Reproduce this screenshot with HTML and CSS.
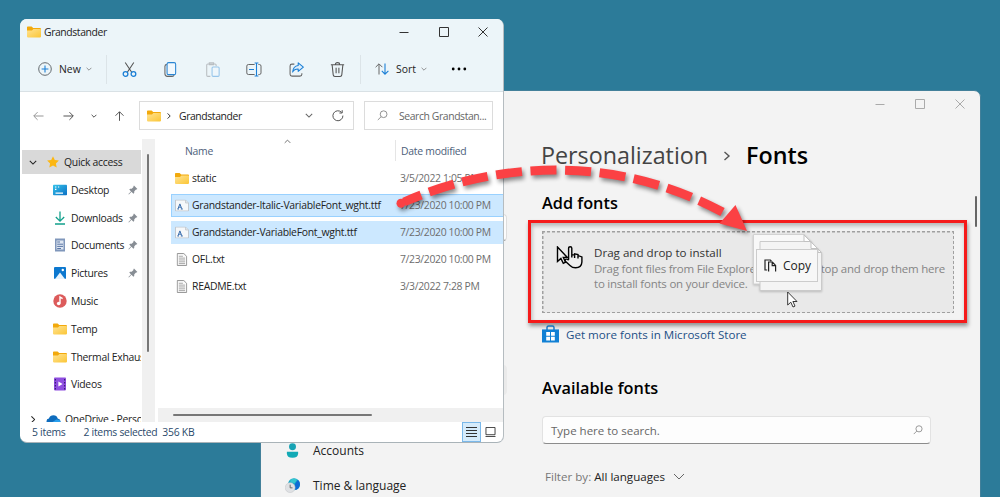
FILE: index.html
```html
<!DOCTYPE html>
<html lang="en">
<head>
  <meta charset="UTF-8" />
  <meta name="viewport" content="width=device-width, initial-scale=1" />
  <title>Install fonts</title>
  <link rel="stylesheet" href="styles.css">
</head>
<body>
  <!-- shared icons -->
  <svg class="defs" aria-hidden="true">
    <defs>
      <linearGradient id="gFolder" x1="0" y1="0" x2="1" y2="1">
        <stop offset="0" stop-color="#ffe394" />
        <stop offset="1" stop-color="#fbc636" />
      </linearGradient>
      <linearGradient id="gDesk" x1="0" y1="0" x2="1" y2="1">
        <stop offset="0" stop-color="#35c3ea" />
        <stop offset="1" stop-color="#0b6fc4" />
      </linearGradient>
    </defs>
    <symbol id="folder" viewBox="0 0 14 12">
      <path d="M0 1.2Q0 .4.8.4H4.6L6.2 2H13Q14 2 14 3V6H0Z" fill="#f2a90c" />
      <path d="M0 4.4H5L6.4 3H13.2Q14 3 14 3.8V10.6Q14 11.4 13.2 11.4H.8Q0 11.4 0 10.6Z" fill="url(#gFolder)" />
    </symbol>
    <symbol id="pin" viewBox="0 0 10 10">
      <path d="M6 .6 9.4 4 8.6 4.6 8 4.5 6.3 6.3 6.2 8 5.4 8.7 3.5 6.8 .9 9.6 .4 9.1 3 6.4 1.3 4.6 2 3.8 3.7 3.7 5.5 2 5.4 1.3Z" fill="#878d94" />
    </symbol>
    <symbol id="ttf" viewBox="0 0 14 12">
      <path d="M.5.5H10.5L13.5 3.5V11.5H.5Z" fill="#f6f8fa" stroke="#c2c8ce" />
      <path d="M10.5.5V3.5H13.5" fill="#dfe4e8" stroke="#c2c8ce" stroke-width=".8" />
      <path d="M2.4 9.5H4M5.8 9.5H7.8M3 9.3 4.9 4.4 6.8 9.3M3.8 7.7H6" fill="none" stroke="#3b6fae" stroke-width="1" />
    </symbol>
    <symbol id="txt" viewBox="0 0 12 14">
      <path d="M.9.6H8L11 3.6V13.4H.9Z" fill="#fafafa" stroke="#8c8c8c" />
      <path d="M2.6 3.5H7M2.6 5.5H9.3M2.6 7.5H9.3M2.6 9.5H9.3M2.6 11.4H9.3" stroke="#9a9a9a" stroke-width=".9" />
    </symbol>
    <symbol id="chev" viewBox="0 0 10 6">
      <path d="M1 1 5 5 9 1" fill="none" stroke="currentColor" stroke-width="1.3" />
    </symbol>
    <symbol id="magnify" viewBox="0 0 12 12">
      <circle cx="7.2" cy="4.6" r="3.7" fill="none" stroke="currentColor" />
      <path d="M4.5 7.3.9 10.9" stroke="currentColor" />
    </symbol>
    <symbol id="min" viewBox="0 0 10 10"><path d="M.5 5.5H9.5" stroke="currentColor" /></symbol>
    <symbol id="max" viewBox="0 0 10 10"><path d="M.5.5H9.5V9.5H.5Z" fill="none" stroke="currentColor" /></symbol>
    <symbol id="close" viewBox="0 0 10 10"><path d="M.5.5 9.5 9.5M9.5.5.5 9.5" stroke="currentColor" /></symbol>
  </svg>

  <main class="desktop">
    <!-- Settings -->
    <section class="window settings">
      <div class="caption caption-muted">
        <svg><use href="#min" /></svg>
        <svg><use href="#max" /></svg>
        <svg><use href="#close" /></svg>
      </div>

      <div class="settings-body">
        <nav class="settings-nav">
          <div class="nav-search"></div>
          <div class="nav-item selected"></div>
          <div class="nav-item"></div>
          <div class="nav-item">
            <svg viewBox="0 0 14 16">
              <circle cx="7" cy="4" r="3.7" fill="#18a3b4" />
              <path d="M1 9.4H13V10.8Q13 15.6 7 15.6T1 10.8Z" fill="#12a9b5" />
            </svg>
            Accounts
          </div>
          <div class="nav-item">
            <svg viewBox="0 0 14 14">
              <circle cx="8.4" cy="5.8" r="5.6" fill="#14a7c6" />
              <path d="M12 1.6A5.6 5.6 0 0 1 9.5 11.3L9 6Z" fill="#0c6bd4" />
              <path d="M5 1.6Q8 0 11.4 1.4L9 5 5 4Z" fill="#35c5cf" />
              <circle cx="4.8" cy="9" r="4.6" fill="#dfe1e4" stroke="#c4c7ca" stroke-width=".5" />
              <path d="M4.8 6.2V9.2H7" fill="none" stroke="#666" stroke-width=".9" />
            </svg>
            Time &amp; language
          </div>
        </nav>

        <div class="settings-main">
          <h1><span class="crumb">Personalization</span>
            <svg class="crumb-sep" viewBox="0 0 8 10"><path d="M1.5 1 6 5 1.5 9" fill="none" stroke="#555" stroke-width="1.4" /></svg>
            <span>Fonts</span></h1>

          <h2>Add fonts</h2>
          <div class="highlight">
            <div class="dropzone">
              <svg class="drag-icon" viewBox="0 0 27 23">
                <path d="M1.5 1V15.5L4.9 12.4 7.3 17.3 9.6 16.2 7.3 11.4H11.3Z" fill="#eee" stroke="#000" stroke-width="1.4" />
                <path d="M12.6 13.8V2.2Q12.6.8 14.2.8T15.8 2.2V8.6L18.6 8.9V7.9L22 8.6V9.6L25.9 10.9V16Q25.6 21.8 19.6 21.8 16.4 21.8 14 19.4L9.4 15.4Q8.6 13.8 10 13.2Q11.4 12.8 12.6 14.2M15.8 8V11.5M18.6 8.9V12M22 9.6V12.4" fill="#eee" stroke="#000" stroke-width="1.4" />
              </svg>
              <div class="drop-text">
                <p class="drop-title">Drag and drop to install</p>
                <p>Drag font files from File Explorer or the desktop and drop them here</p>
                <p>to install fonts on your device.</p>
              </div>
            </div>
          </div>

          <a class="store">
            <svg viewBox="0 0 17 18">
              <path d="M5 5V2.5Q5 1 6.5 1H10.5Q12 1 12 2.5V5" fill="none" stroke="#1473c0" stroke-width="1.4" />
              <path d="M0 4.4H17V17.5H0Z" fill="#1180d4" />
              <path d="M4.2 7H8V10.7H4.2ZM9 7H12.8V10.7H9ZM4.2 11.7H8V15.4H4.2ZM9 11.7H12.8V15.4H9Z" fill="#fff" />
            </svg>
            <span>Get more fonts in Microsoft Store</span>
          </a>

          <h2 class="available">Available fonts</h2>
          <div class="font-search">
            <span>Type here to search.</span>
            <svg><use href="#magnify" /></svg>
          </div>
          <div class="filter">
            <span class="filter-label">Filter by:</span>
            <span class="filter-value">All languages</span>
            <svg viewBox="0 0 12 7"><path d="M1 1 6 6 11 1" fill="none" stroke="currentColor" /></svg>
          </div>
        </div>
      </div>
      <div class="settings-scroll"></div>
    </section>

    <!-- File Explorer -->
    <section class="window explorer">
      <header class="explorer-top">
        <div class="titlebar">
          <svg class="folder"><use href="#folder" /></svg>
          <span>Grandstander</span>
          <div class="caption">
            <svg><use href="#min" /></svg>
            <svg><use href="#max" /></svg>
            <svg><use href="#close" /></svg>
          </div>
        </div>
        <div class="toolbar">
          <div class="tool tool-new">
            <svg viewBox="0 0 14 14"><circle cx="7" cy="7" r="6.3" fill="none" stroke="#656b70" /><path d="M7 3.6V10.4M3.6 7H10.4" stroke="#1b7fd6" stroke-width="1.1" /></svg>
            <span>New</span>
            <svg class="chev"><use href="#chev" /></svg>
          </div>
          <div class="tool-icons">
            <svg viewBox="0 0 14 14"><path d="M3 .4 9.2 9.8M11 .4 4.8 9.8" stroke="#555" /><circle cx="3.3" cy="11.2" r="2.2" fill="none" stroke="#1b7fd6" stroke-width="1.2" /><circle cx="10.7" cy="11.2" r="2.2" fill="none" stroke="#1b7fd6" stroke-width="1.2" /></svg>
            <svg viewBox="0 0 14 14"><path d="M3.6 2.2Q1.8 2.4 1.8 4V11Q1.8 13.4 4.2 13.4H8.6Q10 13.4 10.4 12.4" fill="none" stroke="#666" /><rect x="3.8" y=".6" width="8" height="11.2" rx="1.4" fill="#f1f8fd" stroke="#2a85d3" /></svg>
            <svg viewBox="0 0 14 14"><path d="M5 13.4H2.6Q1.6 13.4 1.6 12.4V2.8Q1.6 1.8 2.6 1.8H9.4Q10.4 1.8 10.4 2.8V4M4 .7H8V2.6H4Z" fill="none" stroke="#b9bec2" /><rect x="6.6" y="4.6" width="6.6" height="8.8" rx="1" fill="#eef6fb" stroke="#97c5ea" /></svg>
            <svg class="rename" viewBox="0 0 16 14"><path d="M8.6 2H2.4Q.8 2 .8 3.6V10.4Q.8 12 2.4 12H8.6M12.4 2H13.4Q15 2 15 3.6V10.4Q15 12 13.4 12H12.4" fill="none" stroke="#666" /><path d="M3 7H8M10.5.5V13.5M8.6.5H12.4M8.6 13.5H12.4" stroke="#1b7fd6" stroke-width="1.1" /></svg>
            <svg viewBox="0 0 14 14"><path d="M5 2H2.8Q1 2 1 3.8V11.4Q1 13.2 2.8 13.2H10.2Q12 13.2 12 11.4V10.4" fill="none" stroke="#666" /><path d="M8.6.8 13.4 4.8 8.6 8.8V6.5Q5 6.4 3.4 9.4 3.8 3.8 8.6 3.2Z" fill="#dfeefa" stroke="#1b7fd6" stroke-linejoin="round" /></svg>
            <svg viewBox="0 0 14 14"><path d="M.8 2.6H13.2M5 2.4Q5 .6 7 .6T9 2.4M2 2.8 3 12Q3.2 13.5 4.6 13.5H9.4Q10.8 13.5 11 12L12 2.8M5.7 5.4V10.6M8.3 5.4V10.6" fill="none" stroke="#555" /></svg>
          </div>
          <div class="tool tool-sort">
            <svg viewBox="0 0 14 12"><path d="M4 11.5V1M.6 4.2 4 .8 7.4 4.2" fill="none" stroke="#666" /><path d="M10 .5V11M6.8 7.8 10 11.2 13.4 7.8" fill="none" stroke="#1b7fd6" stroke-width="1.1" /></svg>
            <span>Sort</span>
            <svg class="chev"><use href="#chev" /></svg>
          </div>
          <svg class="more" viewBox="0 0 16 4"><circle cx="2.2" cy="2" r="1.4" /><circle cx="8" cy="2" r="1.4" /><circle cx="13.8" cy="2" r="1.4" /></svg>
        </div>
      </header>

      <div class="address-row">
        <svg class="arrow back" viewBox="0 0 12 10"><path d="M11.5 5H1M5 .8.8 5 5 9.2" fill="none" stroke="#8d8d8d" /></svg>
        <svg class="arrow fwd" viewBox="0 0 12 10"><path d="M.5 5H11M7 .8 11.2 5 7 9.2" fill="none" stroke="#444" /></svg>
        <svg class="recent"><use href="#chev" /></svg>
        <svg class="arrow up" viewBox="0 0 12 11"><path d="M6 10.8V1M1.6 5.2 6 .8 10.4 5.2" fill="none" stroke="#444" /></svg>
        <div class="address">
          <svg class="folder"><use href="#folder" /></svg>
          <svg class="sep" viewBox="0 0 4 6"><path d="M.6.4 3.2 3 .6 5.6" fill="none" stroke="#333" /></svg>
          <span>Grandstander</span>
          <svg class="drop"><use href="#chev" /></svg>
          <svg class="refresh" viewBox="0 0 12 12"><path d="M9.6 2.4A5 5 0 1 0 10.9 5.6M10.2.2V3H7.4" fill="none" stroke="#555" /></svg>
        </div>
        <div class="search">
          <svg><use href="#magnify" /></svg>
          <span>Search Grandstan...</span>
        </div>
      </div>

      <div class="explorer-body">
        <aside class="tree">
          <div class="tree-root active">
            <svg class="twisty"><use href="#chev" /></svg>
            <svg class="star" viewBox="0 0 12 12"><path d="M6 .2 7.8 4 11.9 4.5 8.9 7.4 9.7 11.6 6 9.5 2.3 11.6 3.1 7.4.1 4.5 4.2 4Z" fill="#fcb713" /></svg>
            <span>Quick access</span>
          </div>
          <ul>
            <li><svg viewBox="0 0 14 12"><rect y=".8" width="14" height="10.4" rx=".8" fill="url(#gDesk)" /><path d="M2 3H3.4M2 5.4H3.4M5 3H6.2M2.5 9.2H10" stroke="#fff" stroke-width="1.2" /></svg><span>Desktop</span><svg class="pin"><use href="#pin" /></svg></li>
            <li><svg viewBox="0 0 14 14"><path d="M7 .5V10M2.8 6 7 10.2 11.2 6M2 13H12" fill="none" stroke="#12a08c" stroke-width="1.3" /></svg><span>Downloads</span><svg class="pin"><use href="#pin" /></svg></li>
            <li><svg viewBox="0 0 14 14"><path d="M2 .5H12V13.5H2Z" fill="#8097bb" /><path d="M3.5 2.5H10.5V11.5H3.5Z" fill="#dfe7f2" /><path d="M4.2 4H7M4.2 6.2H10M4.2 8.4H10M4.2 10.5H8" stroke="#5a76a5" /></svg><span>Documents</span><svg class="pin"><use href="#pin" /></svg></li>
            <li><svg viewBox="0 0 14 14"><rect x="1" y="1" width="12" height="12" rx="1" fill="#0c78cf" /><path d="M2 13 7 6.4 12 13Z" fill="#e8f4fd" /><circle cx="9.8" cy="4" r="1.2" fill="#fff" /></svg><span>Pictures</span><svg class="pin"><use href="#pin" /></svg></li>
            <li><svg viewBox="0 0 14 14"><circle cx="7" cy="7" r="6.7" fill="#dc5b5b" /><path d="M7 9.6V3L9.6 4.6" fill="none" stroke="#fff" stroke-width="1.4" /><circle cx="5.7" cy="9.5" r="1.8" fill="#fff" /></svg><span>Music</span></li>
            <li><svg viewBox="0 0 14 12"><use href="#folder" /></svg><span>Temp</span></li>
            <li><svg viewBox="0 0 14 12"><use href="#folder" /></svg><span>Thermal Exhaust</span></li>
            <li><svg viewBox="0 0 14 14"><rect x="1" y=".6" width="12" height="12.8" rx=".8" fill="#8f4fe0" /><path d="M2.4 2V12.6M11.6 2V12.6" stroke="#3c1c78" stroke-width="1.2" stroke-dasharray="1.5 1.5" /><path d="M5.4 4.4 9.6 7 5.4 9.6Z" fill="#fff" /></svg><span>Videos</span></li>
          </ul>
          <div class="tree-root onedrive">
            <svg class="twisty side"><use href="#chev" /></svg>
            <svg class="cloud" viewBox="0 0 14 9"><path d="M3 9Q0 8.6 0 6.2 0 4 2.4 3.6 3.6.3 7 .3 10.2.3 11.2 3.4 14 4 14 6.4 14 9 11 9Z" fill="#0f6cbd" /><path d="M3 9 9.8 4.4Q14 4.4 14 6.6 13.8 9 11 9Z" fill="#2aa0ee" /></svg>
            <span>OneDrive - Personal</span>
          </div>
        </aside>
        <div class="tree-scroll"><div class="thumb"></div></div>

        <div class="files">
          <div class="file-row head">
            <span class="name">Name</span>
            <svg class="sort-mark"><use href="#chev" /></svg>
            <span class="date">Date modified</span>
          </div>
          <div class="file-row"><svg viewBox="0 0 14 12"><use href="#folder" /></svg><span class="name">static</span><span class="date">3/5/2022 1:05 PM</span></div>
          <div class="file-row picked focus"><svg viewBox="0 0 14 12"><use href="#ttf" /></svg><span class="name">Grandstander-Italic-VariableFont_wght.ttf</span><span class="date">7/23/2020 10:00 PM</span></div>
          <div class="file-row picked"><svg viewBox="0 0 14 12"><use href="#ttf" /></svg><span class="name">Grandstander-VariableFont_wght.ttf</span><span class="date">7/23/2020 10:00 PM</span></div>
          <div class="file-row"><svg viewBox="0 0 12 14"><use href="#txt" /></svg><span class="name">OFL.txt</span><span class="date">7/23/2020 10:00 PM</span></div>
          <div class="file-row"><svg viewBox="0 0 12 14"><use href="#txt" /></svg><span class="name">README.txt</span><span class="date">3/3/2022 7:28 PM</span></div>
          <div class="h-scroll"><div class="thumb"></div></div>
        </div>
      </div>

      <footer class="status">
        <span class="count">5 items</span>
        <span class="selection">2 items selected</span>
        <span class="size">356 KB</span>
        <div class="view on"><svg viewBox="0 0 11 10"><path d="M0 .5H11M0 3.5H11M0 6.5H11M0 9.5H11" stroke="#333" /></svg></div>
        <div class="view"><svg viewBox="0 0 11 11"><path d="M.5.5H10.5V8.5H.5ZM0 10.5H11" fill="none" stroke="#333" /></svg></div>
      </footer>
    </section>

    <!-- Dragged files -->
    <div class="drag">
      <svg class="sheets" viewBox="0 0 70 60">
        <path d="M.5.5H51L59 8V50H.5Z" fill="#f8f8f8" stroke="#d2d2d2" />
        <path d="M7 7.5H57L68.5 18.5V56.5H7Z" fill="#f4f4f4" stroke="#cacaca" />
        <path d="M51 .5V7.5H58V14.5H65V18.5H68.5L51 1" fill="#fff" stroke="#c2c2c2" />
      </svg>
      <div class="tip">
        <svg viewBox="0 0 13 13"><path d="M3.2 11H1V1H6.4L7.4 2.2M4.6 12.4V3H8.4L11.6 6.4V12.4M8.2 3V6.6H11.6" fill="none" stroke="#222" stroke-width="1.2" /></svg>
        Copy
      </div>
      <svg class="pointer" viewBox="0 0 11 17"><path d="M.7 1V14L3.8 11.2 6 16 8 15.1 5.9 10.5H10Z" fill="#fff" stroke="#222" stroke-width=".9" /></svg>
    </div>

    <svg class="swoosh" viewBox="0 0 1000 497">
      <path d="M404 202C500 160 620 155 726 214" fill="none" stroke="#fb4144" stroke-width="9" stroke-dasharray="26 8.6" stroke-dashoffset="7.5" />
      <circle cx="401" cy="203.2" r="4.5" fill="#fb4144" />
      <path d="M735.5 205 747 231 719.5 223.5Z" fill="#fb4144" />
    </svg>
  </main>
</body>
</html>
```
FILE: styles.css
```css
*, *::before, *::after {
  box-sizing: border-box;
}
body {
  margin: 0;
  font-family: "Open Sans", "Noto Sans", sans-serif;
  font-size: 10.5px;
  color: #222;
  overflow: hidden;
}
h1, h2, p, ul {
  margin: 0;
  padding: 0;
}
svg {
  display: block;
  flex: none;
}
.defs {
  position: absolute;
  width: 0;
  height: 0;
}

.desktop {
  position: relative;
  width: 1000px;
  height: 497px;
  overflow: hidden;
  background: #2c7b99;
  white-space: nowrap;
}
.window {
  position: absolute;
  overflow: hidden;
}
.caption {
  display: flex;
  gap: 29.5px;
  color: #333;
}
.caption svg {
  width: 10px;
  height: 10px;
}

/* Settings */
.settings {
  left: 260px;
  top: 90px;
  width: 721px;
  height: 420px;
  border: 1px solid #43809a;
  border-radius: 7px;
  background: #f3f3f3;
}
.caption-muted {
  justify-content: flex-end;
  padding: 8px 15px 0 0;
  gap: 30px;
  color: #aaa;
}
.settings-body {
  display: flex;
}
.settings-nav {
  width: 246px;
  padding-top: 105px;
}
.nav-search {
  height: 27px;
  margin-bottom: 124px;
  border: 1px solid #ddd;
  border-bottom-color: #999;
  border-radius: 4px;
  background: #fcfcfc;
}
.nav-item {
  display: flex;
  align-items: center;
  gap: 13px;
  height: 35px;
  padding-left: 24px;
  font-size: 12px;
}
.nav-item svg {
  width: 15px;
  height: 15px;
}
.nav-item.selected {
  height: 30px;
  margin-bottom: 3px;
  border-radius: 4px;
  background: #eaeaea;
}
.settings-main {
  width: 389px;
  margin-left: 35px;
}
.settings-main h1 {
  display: flex;
  align-items: center;
  height: 36px;
  margin: 28px 0 0 -1px;
  font-size: 23.3px;
  font-weight: 600;
  color: #000;
}
.crumb {
  font-weight: 400;
  color: #444;
}
.crumb-sep {
  width: 8px;
  height: 10px;
  margin: 1px 15px 0 15px;
}
.settings-main h2 {
  height: 24px;
  margin-top: 18px;
  font-size: 16.3px;
  line-height: 24px;
  font-weight: 600;
  color: #000;
}
.highlight {
  width: 439px;
  height: 103px;
  margin: 5px 0 0 -14px;
  padding: 8px 10px 0 11px;
  border: 3px solid #f51a1a;
  box-shadow: 1px 3px 4px rgba(0, 0, 0, .4), inset 1px 3px 4px rgba(0, 0, 0, .25);
}
/* 3px dash, 2px gap on each edge */
.dropzone {
  display: flex;
  height: 82px;
  padding: 15px 0 0 14px;
  background:
    repeating-linear-gradient(90deg, #a0a0a0 0 3px, transparent 3px 5px) top / 100% 1.5px no-repeat,
    repeating-linear-gradient(90deg, #a0a0a0 0 3px, transparent 3px 5px) bottom / 100% 1.5px no-repeat,
    repeating-linear-gradient(#a0a0a0 0 3px, transparent 3px 5px) left / 1.5px 100% no-repeat,
    repeating-linear-gradient(#a0a0a0 0 3px, transparent 3px 5px) right / 1.5px 100% no-repeat,
    #e9e9e9;
}
.drag-icon {
  width: 27px;
  height: 23px;
}
.drop-text {
  margin: -1px 0 0 11px;
  font-size: 11.5px;
  line-height: 15.7px;
  letter-spacing: -.22px;
  color: #858585;
}
.drop-title {
  font-size: 11.6px;
  letter-spacing: 0;
  color: #333;
}
.store {
  display: flex;
  align-items: center;
  gap: 7px;
  height: 18px;
  margin-top: 2px;
  font-size: 11.6px;
  color: #1d4f86;
}
.store svg {
  width: 17px;
  height: 18px;
}
.settings-main .available {
  margin-top: 33px;
}
.font-search {
  display: flex;
  align-items: center;
  justify-content: space-between;
  height: 28px;
  margin-top: 16px;
  padding: 0 7px 0 8px;
  border: 1px solid #e2e2e2;
  border-bottom-color: #8c8c8c;
  border-radius: 4px;
  background: #fdfdfd;
  font-size: 11.5px;
  color: #666;
}
.font-search svg {
  width: 10px;
  height: 10px;
  color: #888;
}
.filter {
  display: flex;
  align-items: center;
  height: 20px;
  margin: 22px 0 0 3px;
  font-size: 11.6px;
}
.filter-label {
  margin-right: 3px;
  color: #777;
}
.filter svg {
  width: 12px;
  height: 7px;
  margin-left: 8px;
  color: #666;
}
.settings-scroll {
  position: absolute;
  right: 3px;
  top: 105px;
  width: 2px;
  height: 31px;
  border-radius: 1px;
  background: #666;
}

/* Explorer */
.explorer {
  display: flex;
  flex-direction: column;
  left: 20px;
  top: 19px;
  width: 484px;
  height: 424px;
  border-right: 1px solid #b5bcc0;
  border-bottom: 1px solid #a9b3b8;
  border-radius: 7px;
  background: #fff;
  font-size: 10.4px;
  letter-spacing: -.27px;
}
.explorer-top {
  height: 73px;
  border-bottom: 1px solid #d9e1e5;
  background: #ecf5f9;
}
.titlebar {
  display: flex;
  align-items: center;
  height: 25px;
  padding: 0 15px 0 7px;
  letter-spacing: -.4px;
}
.titlebar .folder {
  margin-right: 3px;
}
.folder {
  width: 14px;
  height: 12px;
}
.titlebar .caption {
  margin-left: auto;
}
.toolbar {
  display: flex;
  align-items: center;
  height: 50px;
}
.tool {
  display: flex;
  align-items: center;
  letter-spacing: 0;
}
.tool svg {
  width: 14px;
  height: 14px;
}
.tool .chev {
  width: 6px;
  height: 4px;
  color: #777;
}
.tool-new {
  width: 87px;
  height: 29px;
  padding-left: 18px;
  border-right: 1px solid #dce4e8;
}
.tool-new span {
  margin: 0 5px 0 7px;
}
.tool-icons {
  display: flex;
  justify-content: space-between;
  width: 254px;
  height: 29px;
  align-items: center;
  padding: 0 15px 0 15px;
  border-right: 1px solid #dce4e8;
}
.tool-icons svg {
  width: 15px;
  height: 15px;
}
.tool-icons .rename {
  width: 16px;
}
.tool-sort {
  margin-left: 14px;
}
.tool-sort span {
  margin: 0 5px 0 7px;
}
.more {
  width: 16px;
  height: 4px;
  margin-left: 24px;
}

.address-row {
  display: flex;
  align-items: center;
  height: 47px;
  padding-left: 13px;
}
.arrow {
  width: 11px;
  height: 10px;
}
.fwd {
  margin-left: 19px;
}
.recent {
  width: 6px;
  height: 4px;
  margin: 0 17px;
}
.address, .search {
  display: flex;
  align-items: center;
  height: 29px;
  border: 1px solid #dcdcdc;
}
.address {
  width: 215px;
  margin-left: 14px;
  padding: 0 9px 0 7px;
  letter-spacing: -.4px;
}
.sep {
  width: 4px;
  height: 6px;
  margin: 0 8px 0 6px;
}
.drop {
  width: 8px;
  height: 5px;
  margin: 0 19px 0 auto;
  color: #666;
}
.refresh {
  width: 12px;
  height: 12px;
}
.search {
  width: 129px;
  margin-left: 10px;
  padding-left: 12px;
  color: #666;
  letter-spacing: -.4px;
}
.search svg {
  width: 11px;
  height: 11px;
  margin-right: 11px;
  color: #888;
}

.explorer-body {
  display: flex;
  height: 283px;
}
.tree {
  width: 121px;
  padding: 11px 0 0 2px;
  overflow: hidden;
}
.tree ul {
  list-style: none;
}
.tree-root, .tree li {
  display: flex;
  align-items: center;
}
.tree-root {
  height: 24px;
  padding-left: 7px;
}
.tree-root.active {
  width: 119px;
  margin-bottom: 2px;
  background: #d9d9d9;
}
.twisty {
  width: 8px;
  height: 5px;
}
.side {
  transform: rotate(-90deg);
}
.star {
  width: 12px;
  height: 12px;
  margin: 0 5px 0 10px;
}
.cloud {
  width: 15px;
  height: 9px;
  margin: 0 4px 0 9px;
}
.tree li {
  height: 27.8px;
  padding-left: 31px;
}
.tree li svg:first-child {
  width: 14px;
  height: 14px;
  margin-right: 4px;
}
.tree li .pin {
  width: 10px;
  height: 10px;
  margin: 0 3px 0 auto;
}
.onedrive {
  margin-top: 9px;
}
.tree-scroll {
  width: 13px;
  margin-left: 1px;
  padding: 15px 0 0 5px;
  background: #f0f0f0;
}
.thumb {
  border-radius: 1px;
  background: #777;
}
.tree-scroll .thumb {
  width: 2px;
  height: 198px;
}

.files {
  display: flex;
  flex-direction: column;
  width: 345px;
  margin-left: auto;
}
.file-row {
  display: flex;
  align-items: center;
  height: 23px;
  margin: 0 0 4px 13px;
  padding: 0 0 1px 3px;
  border: 1px solid transparent;
}
.file-row svg {
  width: 14px;
  height: 13px;
  margin-right: 3px;
}
.file-row .name {
  width: 208px;
}
.file-row .date {
  color: #6d6d6d;
  letter-spacing: -.33px;
}
.file-row.head {
  margin-bottom: 5px;
  padding: 0 0 0 13px;
  color: #4c607a;
}
.head .name {
  width: 99px;
}
.head .sort-mark {
  width: 7px;
  height: 5px;
  margin: -18px 104px 0 0;
  transform: rotate(180deg);
  color: #666;
}
.file-row.head .date {
  height: 21px;
  padding-left: 5px;
  border-left: 1px solid #e5e5e5;
  line-height: 23px;
  color: #4c607a;
  letter-spacing: -.25px;
}
.picked {
  background: #cce8ff;
}
.focus {
  border-color: #99d1ff;
  border-right: 0;
}
.h-scroll {
  height: 14px;
  margin-top: auto;
  padding: 6px 0 0 15px;
  background: #f0f0f0;
}
.h-scroll .thumb {
  width: 199px;
  height: 2px;
}

.status {
  display: flex;
  align-items: center;
  height: 20px;
  padding: 0 3px 0 12px;
  color: #2b4a6b;
  letter-spacing: -.27px;
}
.selection {
  margin: 0 5px 0 18px;
}
.view {
  display: flex;
  align-items: center;
  justify-content: center;
  width: 19px;
  height: 20px;
}
.size {
  margin-right: auto;
}
.view svg {
  width: 11px;
  height: 10px;
}
.view.on {
  border: 1px solid #7ab8ea;
  background: #d5ebfb;
}

/* Drag image */
.drag {
  position: absolute;
  left: 753px;
  top: 234px;
  width: 72px;
  height: 76px;
}
.sheets {
  width: 70px;
  height: 60px;
  filter: drop-shadow(0 1px 1px rgba(0, 0, 0, .2));
}
.tip {
  position: absolute;
  left: 3px;
  top: 15px;
  display: flex;
  align-items: center;
  gap: 6px;
  width: 62px;
  height: 33px;
  padding-left: 7px;
  border: 1px solid #ccc;
  background: #f7f7f7;
  font-size: 12px;
}
.tip svg {
  width: 13px;
  height: 13px;
}
.pointer {
  position: absolute;
  left: 34px;
  top: 57px;
  width: 11px;
  height: 17px;
}
.swoosh {
  position: absolute;
  left: 0;
  top: 0;
  width: 1000px;
  height: 497px;
  filter: drop-shadow(2px 3px 2px rgba(0, 0, 0, .45));
}
```
